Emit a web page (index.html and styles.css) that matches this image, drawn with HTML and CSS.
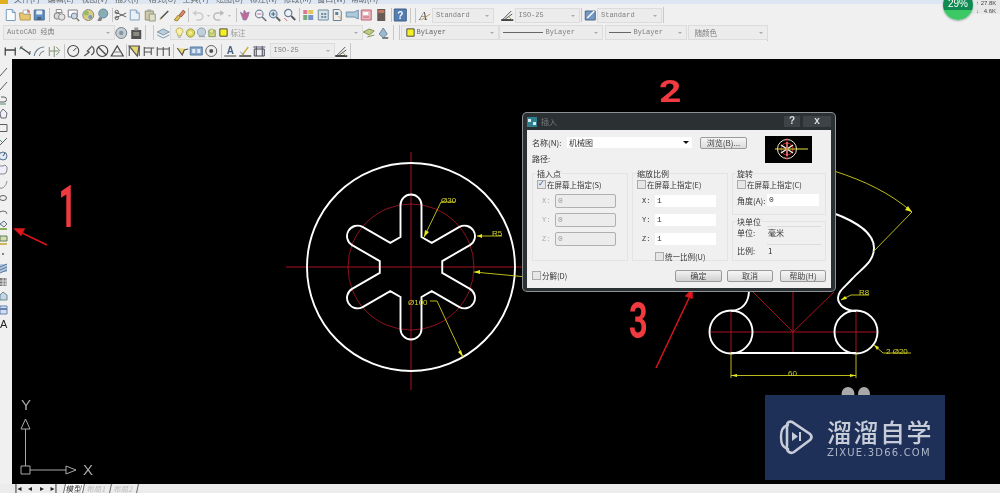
FILE: index.html
```html
<!DOCTYPE html>
<html lang="zh">
<head>
<meta charset="utf-8">
<title>AutoCAD 插入</title>
<link rel="stylesheet" href="styles.css">
</head>
<body>
<svg class="sprite" xmlns="http://www.w3.org/2000/svg">
  <symbol id="new" viewBox="0 0 14 14"><path d="M3 1.500h6l3 3v8H3z" fill="#fff" stroke="#5c8ab5"/><path d="M9 1.500v3h3" fill="#cfe0f0" stroke="#5c8ab5"/></symbol>
  <symbol id="open" viewBox="0 0 14 14"><path d="M1 5h4l1 1h6v6H2z" fill="#e5bd55" stroke="#a98428"/><path d="M5 2h6v4H5z" fill="#fff" stroke="#7b93ad" stroke-width=".7"/><path d="M9 1l3 3-3 1z" fill="#d8553a"/></symbol>
  <symbol id="save" viewBox="0 0 14 14"><path d="M2 2h10v10H2z" fill="#3f79b8" stroke="#27527f"/><path d="M4 2.500h6v4H4z" fill="#e8f0f7"/><path d="M5 9h4v3H5z" fill="#24456b"/></symbol>
  <symbol id="print" viewBox="0 0 14 14"><path d="M4 1.500h5l1 3H4z" fill="#fff" stroke="#777"/><circle cx="5" cy="8" r="3.200" fill="#d5d5d5" stroke="#666"/><circle cx="9.500" cy="9" r="3.200" fill="#e0e0e0" stroke="#777"/></symbol>
  <symbol id="prev" viewBox="0 0 14 14"><path d="M2 2h9v7H2z" fill="#fff" stroke="#667"/><circle cx="8" cy="8" r="3" fill="#bcd5ea" stroke="#667"/><path d="M10 10l3 3" stroke="#665" stroke-width="1.500"/></symbol>
  <symbol id="ball" viewBox="0 0 14 14"><circle cx="7" cy="7" r="5.500" fill="#d9c66a" stroke="#777"/><circle cx="5" cy="5" r="2.500" fill="#7fb04c"/><circle cx="9" cy="9" r="2" fill="#5b86bc"/></symbol>
  <symbol id="globe" viewBox="0 0 14 14"><circle cx="8" cy="5.500" r="4.500" fill="#6f9fb8" stroke="#4d6f82"/><path d="M6 3l3 1-1 3-2-1z" fill="#79a560"/><path d="M4 9l-2 4h4l1-3z" fill="#6a6a6a"/></symbol>
  <symbol id="cut" viewBox="0 0 14 14"><path d="M1 4l11 5M1 10l11-5" stroke="#444" fill="none"/><circle cx="2.500" cy="4" r="1.700" fill="none" stroke="#444"/><circle cx="2.500" cy="10" r="1.700" fill="none" stroke="#444"/></symbol>
  <symbol id="copy" viewBox="0 0 14 14"><path d="M2 2h6l3 3v7H2z" fill="#e9f1f8" stroke="#6a90b6"/><path d="M8 2v3h3" fill="#bcd3e8" stroke="#6a90b6"/></symbol>
  <symbol id="paste" viewBox="0 0 14 14"><path d="M2 3h8v9H2z" fill="#c8c19a" stroke="#7f7a55"/><path d="M6 6h6v7H6z" fill="#dcdcc0" stroke="#7a8a6a"/><path d="M4 1.500h4v2H4z" fill="#999"/></symbol>
  <symbol id="slash" viewBox="0 0 14 14"><path d="M3 11l8-8" stroke="#333" stroke-width="1.600"/><path d="M2 12l2-1-1-1z" fill="#b69c3a"/></symbol>
  <symbol id="paint" viewBox="0 0 14 14"><path d="M2 12l4-5 2 2-3 4z" fill="#e2b233" stroke="#8d6b18"/><path d="M7 7l4-5 2 2-4 5z" fill="#e0703c" stroke="#774022"/></symbol>
  <symbol id="undo" viewBox="0 0 14 14"><path d="M4 5h5a3 3 0 0 1 0 7H6" fill="none" stroke="#c4c4c4" stroke-width="1.600"/><path d="M6 2L2 5l4 3z" fill="#c4c4c4"/></symbol>
  <symbol id="redo" viewBox="0 0 14 14"><path d="M10 5H5a3 3 0 0 0 0 7h3" fill="none" stroke="#b0b0b0" stroke-width="1.600"/><path d="M8 2l4 3-4 3z" fill="#b0b0b0"/></symbol>
  <symbol id="drop" viewBox="0 0 7 14"><path d="M2 7h3L3.500 9z" fill="#bbb"/></symbol>
  <symbol id="pan" viewBox="0 0 14 14"><path d="M2 4l3 2 1-4 2 3 3-1-1 4-2 4H5z" fill="#b84a8a" stroke="#6b6f98" stroke-width=".7"/></symbol>
  <symbol id="zoom1" viewBox="0 0 14 14"><circle cx="6" cy="6" r="3.800" fill="#eef4fa" stroke="#5c6f85" stroke-width="1.200"/><path d="M9 9l4 4" stroke="#556" stroke-width="1.600"/><path d="M4 6h4" stroke="#c2526b"/></symbol>
  <symbol id="zoom2" viewBox="0 0 14 14"><circle cx="6" cy="6" r="3.800" fill="#c9def0" stroke="#4f6f94" stroke-width="1.200"/><path d="M9 9l4 4" stroke="#444" stroke-width="1.800"/><path d="M4 6h4M6 4v4" stroke="#345"/></symbol>
  <symbol id="zoom3" viewBox="0 0 14 14"><circle cx="6" cy="5" r="3.600" fill="#eef4fa" stroke="#4a5f80" stroke-width="1.200"/><path d="M9 8l4 4" stroke="#333" stroke-width="1.800"/><path d="M2 10l3 3" stroke="#c2526b"/></symbol>
  <symbol id="props" viewBox="0 0 14 14"><path d="M2 2h4v4H2z" fill="#d5607e"/><path d="M7 2h5v4H7z" fill="#d9c040"/><path d="M2 7h4v5H2z" fill="#5aa05c"/><path d="M7 7h5v5H7z" fill="#5b7fc0"/></symbol>
  <symbol id="grid" viewBox="0 0 14 14"><path d="M2 2h10v10H2z" fill="#d2e0e8" stroke="#54798a"/><path d="M5 5h2v2H5zM8 5h2v2H8zM5 8h2v2H5zM8 8h2v2H8z" fill="#54798a"/></symbol>
  <symbol id="sheet" viewBox="0 0 14 14"><path d="M3 1.500h6l2 2v9H3z" fill="#eee" stroke="#567"/><path d="M5 4h3v3H5z" fill="#406a86"/><path d="M8 8l4 4" stroke="#d09040"/></symbol>
  <symbol id="mark" viewBox="0 0 14 14"><path d="M1 4h8l4-2v9l-4-2H1z" fill="#9fc1d8" stroke="#5a7f9c"/></symbol>
  <symbol id="calc" viewBox="0 0 14 14"><path d="M2 2h10v10H2z" fill="#e5aab4" stroke="#b8485c"/><path d="M4 4h5v3H4z" fill="#fff"/><path d="M4 9h6" stroke="#b8485c"/></symbol>
  <symbol id="book" viewBox="0 0 14 14"><path d="M3 1h8v12H3z" fill="#4b3a34"/><path d="M4 2h6v3H4z" fill="#b85d44"/></symbol>
  <symbol id="help" viewBox="0 0 14 14"><path d="M1 1h12v12H1z" fill="#2f66a8" stroke="#1d3f6e"/><text x="7" y="11" font-size="10" font-weight="700" fill="#fff" text-anchor="middle" font-family="Liberation Sans">?</text></symbol>
  <symbol id="tstyle" viewBox="0 0 14 14"><text x="1" y="12" font-size="13" fill="#333" font-family="Liberation Serif" font-style="italic">A</text><path d="M3 12l9-6" stroke="#b8862f"/></symbol>
  <symbol id="dstyle" viewBox="0 0 14 14"><path d="M1 12h12" stroke="#222" stroke-width="2"/><path d="M3 11l8-8M5 11l7-5" stroke="#333"/><path d="M9 9l3 3" stroke="#9f8a30"/></symbol>
  <symbol id="tbl" viewBox="0 0 14 14"><path d="M2 3h10v9H2z" fill="#5a85b8" stroke="#2a4a76"/><path d="M4 10l7-7" stroke="#fff" stroke-width="1.500"/></symbol>
  <symbol id="wksp" viewBox="0 0 14 14"><circle cx="7" cy="7" r="5.500" fill="#bcc5cc" stroke="#5d6b74"/><circle cx="7" cy="7" r="2.200" fill="#6c8391"/></symbol>
  <symbol id="lock" viewBox="0 0 14 14"><path d="M2 4h10v9H2z" fill="#2f2f2f"/><path d="M4 6h6v4H4z" fill="#77736a"/><path d="M5 1.500h4v3H5z" fill="#888"/></symbol>
  <symbol id="layers" viewBox="0 0 14 14"><path d="M1 6l6-3 6 3-6 3z" fill="#afc7d8" stroke="#62839b"/><path d="M1 9l6 3 6-3" fill="none" stroke="#62839b"/></symbol>
  <symbol id="lstate" viewBox="0 0 14 14"><path d="M1 6l6-3 5 2-5 4z" fill="#b5c46a" stroke="#6a7d32"/><path d="M5 11l7-2" stroke="#6a7d32"/></symbol>
  <symbol id="lmatch" viewBox="0 0 14 14"><path d="M3 8l4-6 4 6-4 4z" fill="#8cadc8" stroke="#4f6f8d"/><path d="M6 12h6" stroke="#666" stroke-width="2"/></symbol>
  <symbol id="bulb" viewBox="0 0 12 14"><path d="M6 1.500a3.500 3.500 0 0 1 2 6.500v2H4V8a3.500 3.500 0 0 1 2-6.500z" fill="#fbf29a" stroke="#b59d2f"/><path d="M4.500 11.500h3" stroke="#888"/></symbol>
  <symbol id="sun" viewBox="0 0 12 14"><circle cx="6" cy="7" r="4.500" fill="#dcd33e" stroke="#7e8a2e"/><circle cx="6" cy="7" r="2" fill="#f2ec8e"/></symbol>
  <symbol id="ly2" viewBox="0 0 12 14"><circle cx="6" cy="6" r="4.500" fill="#b9cbd9" stroke="#75909f"/><path d="M3 11h7" stroke="#7b8e9a"/></symbol>
  <symbol id="ly3" viewBox="0 0 12 14"><path d="M2 4h7v7H2z" fill="#c9d26a" stroke="#6b8a44"/><circle cx="5" cy="5" r="2.500" fill="#e8e08a" stroke="#6b8a44" stroke-width=".6"/></symbol>
  <symbol id="yellow" viewBox="0 0 12 14"><path d="M2 2.500h8v8H2z" fill="#f7f100" stroke="#222"/></symbol>
  <symbol id="dlin" viewBox="0 0 14 14"><path d="M2 3.500v8M12 3.500v8M2 6h10" stroke="#222" stroke-width="1.300"/></symbol>
  <symbol id="dali" viewBox="0 0 14 14"><path d="M2 3l10 7" stroke="#222" stroke-width="1.300"/><path d="M4 2l-2 3M12 7l-1 4" stroke="#333"/><path d="M1 5l3-1" stroke="#2f7f50"/></symbol>
  <symbol id="darc" viewBox="0 0 14 14"><path d="M2 12a10 10 0 0 1 10-9" fill="none" stroke="#4d6d84" stroke-width="1.200"/><path d="M7 12a6 6 0 0 1 5-5" fill="none" stroke="#666"/></symbol>
  <symbol id="dord" viewBox="0 0 14 14"><path d="M2 3v9M7 2v11M2 7h10M9 3l4 4M9 11l3-3" stroke="#6a7f58"/></symbol>
  <symbol id="drad" viewBox="0 0 14 14"><circle cx="7" cy="7" r="5.500" fill="none" stroke="#222" stroke-width="1.100"/><path d="M7 7l3-3" stroke="#222"/></symbol>
  <symbol id="djog" viewBox="0 0 14 14"><path d="M10 2a5 5 0 0 1 0 9M3 12l5-4-2-1 4-4" fill="none" stroke="#333" stroke-width="1.200"/></symbol>
  <symbol id="ddia" viewBox="0 0 14 14"><circle cx="7" cy="7" r="5.500" fill="none" stroke="#222" stroke-width="1.200"/><path d="M3 3l8 8" stroke="#222" stroke-width="1.200"/></symbol>
  <symbol id="dang" viewBox="0 0 14 14"><path d="M1 12h12L7 2z" fill="none" stroke="#222" stroke-width="1.200"/><path d="M3 8h8" stroke="#666"/></symbol>
  <symbol id="dqk" viewBox="0 0 14 14"><path d="M2 2h10l-2 10z" fill="#e2d050" stroke="#333" stroke-width="1.200"/><path d="M2 2v10M12 2v10" stroke="#222"/></symbol>
  <symbol id="dbase" viewBox="0 0 14 14"><path d="M2 3v9M2 4h10M9 4v7M2 8h7" fill="none" stroke="#333" stroke-width="1.100"/></symbol>
  <symbol id="dcont" viewBox="0 0 14 14"><path d="M1 3v9M7 3v9M13 3v9M1 5h12" stroke="#333" stroke-width="1.100"/></symbol>
  <symbol id="tol" viewBox="0 0 14 14"><path d="M2 4l5 7 2-5 4-1" fill="#e3d65a" stroke="#333" stroke-width="1.200"/></symbol>
  <symbol id="dcen" viewBox="0 0 14 14"><path d="M1 3h12v8H1z" fill="#6f9ac6" stroke="#37618c"/><path d="M3 5h3v4H3zM8 5h3v4H8z" fill="#dce9f5"/></symbol>
  <symbol id="dins" viewBox="0 0 14 14"><circle cx="7" cy="7" r="5.500" fill="#eee" stroke="#444"/><circle cx="7" cy="7" r="2" fill="#333"/></symbol>
  <symbol id="dtxt" viewBox="0 0 14 14"><text x="7" y="10" font-size="10" fill="#27436b" text-anchor="middle" font-family="Liberation Sans" font-weight="700">A</text><path d="M1 12h12" stroke="#222" stroke-width="1.200"/></symbol>
  <symbol id="dupd" viewBox="0 0 14 14"><path d="M1 12h12" stroke="#222" stroke-width="1.500"/><path d="M4 11l6-8" stroke="#c8a12e" stroke-width="1.500"/><path d="M2 8l4 3" stroke="#4d7fa8"/></symbol>
  <symbol id="dbox" viewBox="0 0 14 14"><path d="M2 5h10v7H2z" fill="#eee" stroke="#223"/><path d="M4 2v10M10 2v10" stroke="#223"/><path d="M1 3h12" stroke="#446" stroke-width="1.200"/></symbol>
  <symbol id="l-line" viewBox="0 0 12 14"><path d="M0 11L7 3" stroke="#444"/></symbol>
  <symbol id="l-ray" viewBox="0 0 12 14"><path d="M0 11L7 3" stroke="#444"/></symbol>
  <symbol id="l-pl" viewBox="0 0 12 14"><path d="M1 4h3a2.500 2.500 0 0 1 0 5H0" fill="none" stroke="#444"/><path d="M0 11h6" stroke="#2f7f50"/></symbol>
  <symbol id="l-pg" viewBox="0 0 12 14"><path d="M1 11L0 6l3-4 4 4-1 5z" fill="#eef" stroke="#555"/></symbol>
  <symbol id="l-rect" viewBox="0 0 12 14"><path d="M0 3.500h7v7H0" fill="none" stroke="#444"/></symbol>
  <symbol id="l-arc" viewBox="0 0 12 14"><path d="M0 10L7 3" stroke="#444"/><path d="M0 5l2 2" stroke="#2f7f50"/></symbol>
  <symbol id="l-cir" viewBox="0 0 12 14"><circle cx="3" cy="7" r="4" fill="#dfeaf5" stroke="#34597f"/><path d="M3 7L5 4" stroke="#233"/></symbol>
  <symbol id="l-cld" viewBox="0 0 12 14"><path d="M0 3h3l2-1 2 2v3l-1 3-2 1H0" fill="#eef" stroke="#777"/></symbol>
  <symbol id="l-spl" viewBox="0 0 12 14"><path d="M0 11c3 1 6-2 7-7" fill="none" stroke="#777"/></symbol>
  <symbol id="l-ell" viewBox="0 0 12 14"><ellipse cx="3" cy="7" rx="3.500" ry="2.500" fill="none" stroke="#444"/></symbol>
  <symbol id="l-ela" viewBox="0 0 12 14"><path d="M-1 9a4 3 0 1 1 8 0" fill="none" stroke="#555"/></symbol>
  <symbol id="l-blk" viewBox="0 0 12 14"><path d="M0 5l4-3 3 3-3 3z" fill="#dfe7ef" stroke="#4a5d70"/><path d="M0 10h7" stroke="#7aa640" stroke-width="2"/></symbol>
  <symbol id="l-mk" viewBox="0 0 12 14"><path d="M0 3h7v5H0z" fill="#cfd9a8" stroke="#4a6a3a"/><path d="M0 11h7" stroke="#c2a52c" stroke-width="1.800"/></symbol>
  <symbol id="l-pt" viewBox="0 0 12 14"><circle cx="3" cy="7" r="1" fill="#444"/></symbol>
  <symbol id="l-ht" viewBox="0 0 12 14"><path d="M0 3h7v8H0z" fill="#a9c2dd"/><path d="M0 6l7-3M0 9l7-3M0 12l7-3" stroke="#40608a"/></symbol>
  <symbol id="l-gd" viewBox="0 0 12 14"><path d="M0 3h7v8H0z" fill="#666"/><path d="M0 6h7M0 9h7M3 3v8M6 3v8" stroke="#ddd"/></symbol>
  <symbol id="l-rg" viewBox="0 0 12 14"><path d="M0 11V6l3-3 4 3v5z" fill="#bdd3ea" stroke="#577"/></symbol>
  <symbol id="l-tb" viewBox="0 0 12 14"><path d="M0 3h7v8H0z" fill="#cfdcf0" stroke="#4f70a6"/><path d="M0 6h7" stroke="#4f70a6" stroke-width="2"/></symbol>
</svg>

<div class="app">
  <div class="menubar">
    <i class="app-logo"></i>
    <span class="mi mi-file">文件(F)</span><span class="mi">编辑(E)</span><span class="mi">视图(V)</span><span class="mi">插入(I)</span><span class="mi">格式(O)</span><span class="mi">工具(T)</span><span class="mi">绘图(D)</span><span class="mi">标注(N)</span><span class="mi">修改(M)</span><span class="mi">窗口(W)</span><span class="mi">帮助(H)</span>
  </div>

  <div class="tbrow row1">
    <svg class="ic"><use href="#new"/></svg><svg class="ic"><use href="#open"/></svg><svg class="ic"><use href="#save"/></svg>
    <i class="sep s5"></i>
    <svg class="ic"><use href="#print"/></svg><svg class="ic"><use href="#prev"/></svg><svg class="ic"><use href="#ball"/></svg><svg class="ic"><use href="#globe"/></svg>
    <i class="sep s4"></i>
    <svg class="ic"><use href="#cut"/></svg><svg class="ic"><use href="#copy"/></svg><svg class="ic"><use href="#paste"/></svg><svg class="ic"><use href="#slash"/></svg><svg class="ic"><use href="#paint"/></svg>
    <i class="sep s4"></i>
    <svg class="ic"><use href="#undo"/></svg><svg class="dd"><use href="#drop"/></svg><svg class="ic"><use href="#redo"/></svg><svg class="dd"><use href="#drop"/></svg>
    <i class="sep s5"></i>
    <svg class="ic"><use href="#pan"/></svg><svg class="ic"><use href="#zoom1"/></svg><svg class="ic"><use href="#zoom2"/></svg><svg class="ic"><use href="#zoom3"/></svg>
    <i class="sep s5"></i>
    <svg class="ic"><use href="#props"/></svg><svg class="ic"><use href="#grid"/></svg><svg class="ic"><use href="#sheet"/></svg><svg class="ic"><use href="#mark"/></svg><svg class="ic"><use href="#calc"/></svg><svg class="ic"><use href="#book"/></svg>
    <i class="sep s5"></i>
    <svg class="ic"><use href="#help"/></svg>
    <i class="grip g10"></i>
    <svg class="ic"><use href="#tstyle"/></svg>
    <div class="combo w60 ml1"><span>Standard</span></div>
    <svg class="ic ml7"><use href="#dstyle"/></svg>
    <div class="combo w63 ml1"><span>ISO-25</span></div>
    <i class="sep s4"></i>
    <svg class="ic"><use href="#tbl"/></svg>
    <div class="combo w63 ml1"><span>Standard</span></div>
    <i class="tb-end"></i>
  </div>

  <div class="tbrow row2">
    <div class="combo w110 ml4"><span>AutoCAD 经典</span></div>
    <svg class="ic"><use href="#wksp"/></svg><svg class="ic"><use href="#lock"/></svg>
    <i class="grip g13"></i>
    <svg class="ic"><use href="#layers"/></svg>
    <div class="combo w191">
      <svg class="lyi"><use href="#bulb"/></svg><svg class="lyi"><use href="#sun"/></svg><svg class="lyi"><use href="#ly2"/></svg><svg class="lyi"><use href="#ly3"/></svg><svg class="lyi"><use href="#yellow"/></svg>
      <span class="ly-name">标注</span>
    </div>
    <svg class="ic"><use href="#lstate"/></svg><svg class="ic"><use href="#lmatch"/></svg>
    <i class="grip g11"></i>
    <div class="combo w96">
      <svg class="lyi"><use href="#yellow"/></svg><span class="dark">ByLayer</span>
    </div>
    <div class="combo w102 ml2"><i class="lin"></i><span>ByLayer</span></div>
    <div class="combo w80 ml4"><i class="lin short"></i><span>ByLayer</span></div>
    <div class="combo w78 ml3"><span class="cjk">随颜色</span></div>
    <i class="tb-end"></i>
  </div>

  <div class="tbrow row3">
    <svg class="ic"><use href="#dlin"/></svg><svg class="ic"><use href="#dali"/></svg><svg class="ic"><use href="#darc"/></svg><svg class="ic"><use href="#dord"/></svg>
    <i class="sep s5"></i>
    <svg class="ic"><use href="#drad"/></svg><svg class="ic"><use href="#djog"/></svg><svg class="ic"><use href="#ddia"/></svg><svg class="ic"><use href="#dang"/></svg>
    <i class="sep s3"></i>
    <svg class="ic"><use href="#dqk"/></svg><svg class="ic"><use href="#dbase"/></svg><svg class="ic"><use href="#dcont"/></svg>
    <i class="sep s4"></i>
    <svg class="ic"><use href="#tol"/></svg><svg class="ic"><use href="#dcen"/></svg><svg class="ic"><use href="#dins"/></svg>
    <i class="sep s5"></i>
    <svg class="ic"><use href="#dtxt"/></svg><svg class="ic"><use href="#dupd"/></svg><svg class="ic"><use href="#dbox"/></svg>
    <div class="combo w63 ml4"><span>ISO-25</span></div>
    <svg class="ic"><use href="#dstyle"/></svg>
    <i class="tb-end"></i>
  </div>

  <div class="workspace">
    <div class="lefttb">
      <svg class="li"><use href="#l-line"/></svg><svg class="li"><use href="#l-ray"/></svg><svg class="li"><use href="#l-pl"/></svg><svg class="li"><use href="#l-pg"/></svg><svg class="li"><use href="#l-rect"/></svg><svg class="li"><use href="#l-arc"/></svg><svg class="li"><use href="#l-cir"/></svg><svg class="li"><use href="#l-cld"/></svg><svg class="li"><use href="#l-spl"/></svg><svg class="li"><use href="#l-ell"/></svg><svg class="li"><use href="#l-ela"/></svg><svg class="li"><use href="#l-blk"/></svg><svg class="li"><use href="#l-mk"/></svg><svg class="li"><use href="#l-pt"/></svg><svg class="li"><use href="#l-ht"/></svg><svg class="li"><use href="#l-gd"/></svg><svg class="li"><use href="#l-rg"/></svg><svg class="li"><use href="#l-tb"/></svg>
      <span class="li-a">A</span>
    </div>

    <div class="canvas">
      <svg class="drawing" viewBox="12 59 988 425" xmlns="http://www.w3.org/2000/svg">
        <g class="red">
          <circle cx="411" cy="267" r="63"/>
          <path d="M286 267H526M411 152V390"/>
          <path d="M709 332H878M793 292V353M731 311V353M856 311V353M753 292L793 332L834 292"/>
        </g>
        <g class="white">
          <circle cx="411" cy="267" r="104"/>
          <path transform="translate(411 267)" d="M31.230 5.910L58.940 21.910A10.500 10.500 0 0 1 48.440 40.090L20.730 24.090L10.500 30V62A10.500 10.500 0 0 1 -10.500 62V30L-20.730 24.090L-48.440 40.090A10.500 10.500 0 0 1 -58.940 21.910L-31.230 5.910V-5.910L-58.940 -21.910A10.500 10.500 0 0 1 -48.440 -40.090L-20.730 -24.090L-10.500 -30V-62A10.500 10.500 0 0 1 10.500 -62V-30L20.730 -24.090L48.440 -40.090A10.500 10.500 0 0 1 58.940 -21.910L31.230 -5.910Z"/>
          <circle cx="731" cy="332" r="21.500"/>
          <circle cx="856" cy="332" r="21.500"/>
          <path d="M731 353H856"/>
          <path d="M833 213C855 221 874 233 874 248C874 262 862 268 852 279C845 287 838 291 838 298C838 305 846 311 856 311"/>
          <path d="M749 290C749 303 742 310 731 311"/>
        </g>
        <g class="yel">
          <path d="M424 237L441 202H455"/>
          <path d="M477 236H502"/>
          <path d="M430 301H437L463 357"/>
          <path d="M474 272L527 277"/>
          <path d="M834 171C865 181 890 193 912 212L873 252"/>
          <path d="M841 300L851 295H869"/>
          <path d="M874 345L883 353H911"/>
          <path d="M731 353V378M856 353V378M731 375.500H856"/>
        </g>
        <g class="yel-fill">
          <path d="M424 237L425 230L429 232Z"/>
          <path d="M477 236L482 234V238Z"/>
          <path d="M474 272L480 270V274Z"/>
          <path d="M463 357L458 352L461 350Z"/>
          <path d="M912 212L905 210L908 206Z"/>
          <path d="M731 375.500L737 374V377ZM856 375.500L850 374V377Z"/>
          <path d="M841 300L845 296L847 299Z"/>
          <path d="M874 345L879 347L877 350Z"/>
        </g>
        <text class="dim" x="441" y="203">Ø30</text>
        <text class="dim" x="492" y="236">R5</text>
        <text class="dim" x="408" y="305">Ø100</text>
        <text class="dim" x="859" y="295">R8</text>
        <text class="dim" x="886" y="354">2 Ø20</text>
        <text class="dim" x="788" y="376">60</text>

        <g class="ucs">
          <path d="M21 466H30V474H21Z"/>
          <path d="M25.500 466V429M25.500 419L21 429H30ZM30 470H66M66 466L76 470L66 474Z"/>
        </g>
        <text class="ucs-t" x="21" y="410">Y</text>
        <text class="ucs-t" x="83" y="475">X</text>

        <ellipse class="blob" cx="848" cy="394" rx="6.500" ry="7"/>
        <ellipse class="blob" cx="864" cy="394" rx="6" ry="7"/>

        <text class="hand" transform="translate(58.500 227) scale(1.200 2.270)">1</text>
        <text class="hand" transform="translate(659 102) scale(1.500 1.170)">2</text>
        <text class="hand" transform="translate(629 338) scale(1.250 1.900)">3</text>
        <g class="arrow">
          <path d="M47 245L20 232"/>
          <path d="M15 229L24 229L21 235Z"/>
          <path d="M648 166L677 146"/>
          <path d="M682 142L674 144L678 150Z"/>
          <path d="M656 368L690 296"/>
          <path d="M692 290L686 296L692 298Z"/>
        </g>
      </svg>

      <section class="dialog">
        <header class="dlg-title">
          <svg class="dlg-ico" viewBox="0 0 10 10"><path d="M0 0h10v10H0z" fill="#2f7f8f"/><path d="M1 2h3v3H1zM6 5h3v3H6z" fill="#d9eef2"/></svg>
          <span class="dlg-name">插入</span>
          <span class="dlg-q">?</span><span class="dlg-x">x</span>
        </header>
        <div class="dlg-body">
          <div class="dlg-top">
            <div class="dlg-top-main">
              <div class="name-row">
                <label class="lbl name-lbl">名称(N):</label>
                <div class="name-in">机械图<i class="caret"></i></div>
                <button class="btn browse">浏览(B)...</button>
              </div>
              <div class="lbl path-row">路径:</div>
            </div>
            <svg class="preview" viewBox="0 0 47 27">
              <path d="M0 0h47v27H0z" fill="#000"/>
              <circle cx="22" cy="13" r="9.500" fill="none" stroke="#f0e8d0"/>
              <circle cx="22" cy="13" r="6" fill="none" stroke="#d22"/>
              <path d="M22 6v14M16 9l12 8M28 9l-12 8" stroke="#f4eee0" stroke-width="1.500"/>
              <path d="M10 13h33" stroke="#e6e040"/>
              <path d="M22 2v22" stroke="#c02020"/>
            </svg>
          </div>
          <div class="groups">
            <fieldset class="grp g-ins">
              <legend class="lbl">插入点</legend>
              <label class="chk"><i class="box on"></i>在屏幕上指定(S)</label>
              <div class="xyz off"><span>X:</span><div class="fld">0</div></div>
              <div class="xyz off"><span>Y:</span><div class="fld">0</div></div>
              <div class="xyz off"><span>Z:</span><div class="fld">0</div></div>
            </fieldset>
            <fieldset class="grp g-sca">
              <legend class="lbl">缩放比例</legend>
              <label class="chk"><i class="box"></i>在屏幕上指定(E)</label>
              <div class="xyz"><span>X:</span><div class="fld">1</div></div>
              <div class="xyz"><span>Y:</span><div class="fld">1</div></div>
              <div class="xyz"><span>Z:</span><div class="fld">1</div></div>
              <label class="chk uni"><i class="box"></i>统一比例(U)</label>
            </fieldset>
            <div class="col3">
              <fieldset class="grp g-rot">
                <legend class="lbl">旋转</legend>
                <label class="chk"><i class="box"></i>在屏幕上指定(C)</label>
                <div class="kv"><span>角度(A):</span><div class="fld">0</div></div>
              </fieldset>
              <fieldset class="grp g-unit">
                <legend class="lbl">块单位</legend>
                <div class="kv"><span>单位:</span><div class="ro">毫米</div></div>
                <div class="kv"><span>比例:</span><div class="ro">1</div></div>
              </fieldset>
            </div>
          </div>
          <div class="dlg-foot">
            <label class="chk foot-chk"><i class="box"></i>分解(D)</label>
            <button class="btn act first">确定</button>
            <button class="btn act">取消</button>
            <button class="btn act">帮助(H)</button>
          </div>
        </div>
      </section>

      <aside class="mark">
        <svg class="mark-ico" viewBox="0 0 34 36">
          <path d="M9 6C3 8 2 12 2 18s1 10 7 12" fill="none" stroke="#c6ccd8" stroke-width="2.400" stroke-linecap="round"/>
          <path d="M8 27V6C8 3 11 2 13 3L31 15C33 17 33 19 31 21L15 33C12 35 8 33 8 29" fill="none" stroke="#c6ccd8" stroke-width="2.600" stroke-linecap="round"/>
          <path d="M13 13l6 4.500-6 4.500z" fill="#c6ccd8"/>
          <path d="M21 13v9" stroke="#c6ccd8" stroke-width="2"/>
        </svg>
        <div class="mark-txt">
          <div class="mark-cn">溜溜自学</div>
          <div class="mark-en">ZIXUE.3D66.COM</div>
        </div>
      </aside>
    </div>
  </div>

  <div class="tabs">
    <div class="navs"><span>|◂</span><span>◂</span><span>▸</span><span>▸|</span></div>
    <span class="tab active">模型</span><span class="tab">布局1</span><span class="tab">布局2</span>
  </div>

  <div class="net">
    <span><b class="up">↑</b> 27.8K</span>
    <span class="net-down"><b class="down">↓</b> 4.6K</span>
  </div>
  <div class="gauge">29%</div>
</div>
</body>
</html>
```

FILE: styles.css
```css
* { box-sizing: border-box; }
html, body { margin: 0; height: 100%; overflow: hidden; background: #f0f0f0; }
.sprite { display: none; }
i { display: block; font-style: normal; }

.app {
  position: relative;
  width: 1000px;
  height: 493px;
  display: flex;
  flex-direction: column;
  overflow: hidden;
  background: #f0f0f0;
  font: 8px "Noto Sans CJK SC", "Liberation Sans", sans-serif;
  color: #333;
  filter: blur(.55px);
}

/* menu, cropped at the window's upper edge */
.menubar {
  height: 4px;
  flex: none;
  display: flex;
  align-items: flex-end;
  background: #dde7f4;
  line-height: 10px;
  color: #666;
}
.app-logo { width: 8px; height: 4px; background: #e0b020; }
.mi { width: 33.700px; flex: none; font-size: 8px; white-space: nowrap; }
.mi-file { margin-left: 6px; }

/* toolbars */
.tbrow { flex: none; display: flex; align-items: center; background: #f0f0f0; }
.row1 { height: 19px; padding: 3px 0 0 3px; width: 664px; }
.row2 { height: 18px; padding-top: 1px; width: 768px; }
.row3 { height: 18px; padding: 1px 0 0 3px; width: 351px; }
.ic { width: 14.500px; height: 14px; flex: none; opacity: .82; }
.dd { width: 7px; height: 14px; flex: none; }
.sep { height: 14px; flex: none; position: relative; }
.sep::after { content: ""; position: absolute; left: 50%; top: 0; bottom: 0; width: 1px; background: #c4c4c4; }
.s3 { width: 3px; } .s4 { width: 4px; } .s5 { width: 5px; }
.grip { height: 15px; flex: none; border-left: 1px solid #c8c8c8; border-right: 1px solid #c8c8c8; margin: 0 2px; }
.g10 { width: 6px; }
.g13 { width: 9px; }
.g11 { width: 7px; }
.tb-end { width: 1px; height: 16px; background: #c8c8c8; margin-left: auto; flex: none; }

.combo {
  position: relative;
  height: 13px;
  flex: none;
  display: flex;
  align-items: center;
  padding-left: 3px;
  background: #ececec;
  box-shadow: 0 0 0 1px #dcdcdc;
  font: 7px/13px "Liberation Mono", "Noto Sans CJK SC", monospace;
  color: #808080;
  white-space: nowrap;
}
.combo::after {
  content: "";
  position: absolute;
  right: 4px;
  top: 6px;
  border: 2px solid transparent;
  border-top-color: #aaa;
}
.w60 { width: 60px; } .w63 { width: 63px; } .w78 { width: 78px; } .w80 { width: 80px; }
.w96 { width: 96px; } .w102 { width: 102px; } .w110 { width: 110px; } .w191 { width: 191px; }
.ml1 { margin-left: 1px; } .ml2 { margin-left: 2px; } .ml3 { margin-left: 3px; } .ml4 { margin-left: 4px; } .ml7 { margin-left: 7px; }
.dark { color: #666; margin-left: 1px; }
.cjk { font: 7.500px "Noto Sans CJK SC", sans-serif; margin-left: 3px; color: #808080; }
.lyi { width: 11px; height: 14px; flex: none; opacity: .85; }
.ly-name { font: 7.500px "Noto Sans CJK SC", sans-serif; margin-left: 2px; color: #999; }
.lin { width: 40px; height: 1px; background: #666; margin-right: 3px; flex: none; }
.lin.short { width: 22px; }

/* workspace */
.workspace { flex: 1; display: flex; min-height: 0; }
.lefttb {
  width: 12px;
  flex: none;
  display: flex;
  flex-direction: column;
  padding-top: 6px;
  background: #f0f0f0;
  overflow: hidden;
}
.li { width: 12px; height: 14px; flex: none; opacity: .85; }
.li-a { font: 11px/14px "Liberation Sans", sans-serif; color: #222; }
.canvas { position: relative; flex: 1; background: #000; overflow: hidden; }
.drawing { position: absolute; inset: 0; width: 100%; height: 100%; display: block; }
.red *, .white *, .yel * { fill: none; }
.red { stroke: #a81320; stroke-width: 1; }
.red circle { stroke: #8e1220; }
.white { stroke: #fff; stroke-width: 1.900; }
.yel { stroke: #cfcf1e; stroke-width: .9; }
.yel-fill { fill: #e8e820; }
.dim { font: 8px "Liberation Sans", sans-serif; fill: #d4d42a; }
.ucs { fill: none; stroke: #bbb; stroke-width: .9; }
.ucs-t { font: 15px "Liberation Sans", sans-serif; fill: #aaa; }
.blob { fill: #aaa; }
.hand { font: 700 26px Roboto, "Liberation Sans", sans-serif; fill: #f03a3f; }
.arrow { fill: #e5171e; stroke: #d9151c; stroke-width: 1.500; }

/* insert dialog */
.dialog {
  position: absolute;
  left: 511px;
  top: 54px;
  width: 312px;
  height: 178px;
  padding: 0 4px 3px;
  display: flex;
  flex-direction: column;
  background: #2b3033;
  border-radius: 4px;
  box-shadow: 0 0 0 1px #8b9096;
}
.dlg-title { height: 17px; flex: none; display: flex; align-items: center; color: #cfd3d6; }
.dlg-ico { width: 10px; height: 10px; flex: none; margin-right: 4px; }
.dlg-name { font-size: 8px; color: #75797c; flex: 1; }
.dlg-q, .dlg-x {
  height: 11px;
  background: #3d4346;
  color: #ddd;
  font: 700 10px/10px "Liberation Sans", sans-serif;
  text-align: center;
}
.dlg-q { width: 16px; margin-right: 3px; }
.dlg-x { width: 28px; }
.dlg-body {
  flex: 1;
  background: #f0f0f0;
  padding: 6px 5px 0;
  display: flex;
  flex-direction: column;
  font-size: 8px;
  color: #333;
  min-height: 0;
}
.lbl { font-size: 8px; line-height: 11px; color: #333; }
.dlg-top { display: flex; height: 30px; flex: none; }
.dlg-top-main { width: 233px; flex: none; display: flex; flex-direction: column; }
.name-row { display: flex; align-items: center; height: 13px; }
.name-lbl { width: 35px; flex: none; }
.name-in {
  width: 125px;
  height: 11px;
  flex: none;
  position: relative;
  background: #fff;
  font-size: 8px;
  line-height: 11px;
  padding-left: 2px;
}
.caret { position: absolute; right: 3px; top: 4px; border: 3px solid transparent; border-top-color: #111; border-bottom: 0; }
.btn {
  height: 12px;
  padding: 0;
  font: 8px/10px "Noto Sans CJK SC", sans-serif;
  color: #444;
  background: linear-gradient(#f6f6f6, #dcdcdc);
  border: 1px solid #9a9a9a;
  border-radius: 2px;
}
.browse { width: 47px; margin-left: 8px; flex: none; }
.path-row { margin-top: 4px; }
.preview { width: 47px; height: 27px; flex: none; display: block; }

.groups { display: grid; grid-template-columns: 96px 96px 94px; gap: 0 4px; margin-top: 2px; flex: none; }
.grp { border: 1px solid #e4e4e4; margin: 0; padding: 0 4px; min-width: 0; position: relative; }
.grp legend { padding: 0; font-size: 8px; }
.g-ins, .g-sca { height: 93px; }
.chk { display: flex; align-items: center; font-size: 7.500px; line-height: 11px; white-space: nowrap; color: #333; }
.box { width: 9px; height: 9px; flex: none; margin-right: 1px; background: #e6e6e6; border: 1px solid #aaa; position: relative; }
.box.on::after { content: "✓"; position: absolute; left: 0; top: -2px; font: 700 8px/10px "DejaVu Sans", sans-serif; color: #3560a8; }
.xyz { display: flex; align-items: center; height: 14px; margin-top: 5px; }
.xyz:first-of-type { margin-top: 4px; }
.xyz span { width: 18px; flex: none; padding-left: 5px; font: 7px "Liberation Mono", monospace; }
.fld { height: 12px; flex: 1; background: #fff; font: 8px/12px "Liberation Mono", monospace; padding-left: 2px; }
.xyz .fld { max-width: 61px; }
.xyz.off span { color: #aaa; }
.xyz.off .fld { height: 14px; background: #ececec; border: 1px solid #b0b0b0; border-radius: 2px; color: #999; line-height: 12px; }
.uni { margin: 5px 0 0 18px; }

.col3 { display: flex; flex-direction: column; height: 93px; }
.g-rot { height: 47px; flex: none; }
.kv { display: flex; align-items: center; height: 12px; margin-top: 4px; font-size: 8px; white-space: nowrap; }
.kv > span { width: 30px; flex: none; }
.kv .fld { max-width: 52px; }
.g-unit { flex: 1; margin-top: 1px; }
.g-unit .kv { margin-top: -1px; margin-bottom: 7px; }
.g-unit .kv:last-child { margin-bottom: 0; }
.ro { flex: 1; border-top: 1px solid #dcdcdc; font-size: 8px; line-height: 12px; padding-left: 1px; }

.dlg-foot { display: flex; align-items: center; flex: 1; gap: 5px; min-height: 0; padding-top: 2px; }
.foot-chk { flex: 1; }
.act { width: 46px; flex: none; }
.act.first { width: 47px; background: linear-gradient(#f2f2f2, #cfcfcf); }
.dlg-foot .act:last-child { margin-left: 2px; }

/* watermark */
.mark {
  position: absolute;
  left: 753px;
  top: 336px;
  width: 180px;
  height: 85px;
  padding: 24px 0 0 14px;
  background: #1f3058;
  display: flex;
  align-items: flex-start;
}
.mark-ico { width: 34px; height: 36px; flex: none; display: block; }
.mark-txt { margin-left: 14px; display: flex; flex-direction: column; }
.mark-cn { font: 500 25px/24px "Noto Sans CJK SC", sans-serif; letter-spacing: 1.500px; color: #c6ccd8; white-space: nowrap; }
.mark-en { font: 10px/10px "DejaVu Sans", sans-serif; letter-spacing: 1.200px; margin-top: 5px; color: #aeb6c8; white-space: nowrap; }

/* tab bar */
.tabs { height: 9px; flex: none; display: flex; align-items: center; overflow: hidden; background: #ececec; padding-left: 12px; line-height: 9px; }
.navs { display: flex; width: 52px; flex: none; font: 700 8px/9px "DejaVu Sans", sans-serif; color: #222; }
.navs span { width: 12px; text-align: center; }
.tab { width: 27px; padding-left: 3px; flex: none; color: #bbb; white-space: nowrap; font-size: 7.500px; border-right: 1px solid #666; transform: skewX(-12deg); }
.tab.active { background: #fff; color: #333; width: 20px; font-size: 8px; padding-left: 1px; border-left: 1px solid #666; }

/* floating network meter */
.net {
  position: absolute;
  left: 970px;
  top: 0;
  width: 30px;
  height: 14px;
  padding-left: 6px;
  display: flex;
  flex-direction: column;
  justify-content: space-between;
  background: #e8e8e8;
  font: 6px/6px "Liberation Sans", sans-serif;
  color: #444;
  white-space: nowrap;
}
.net b { font-weight: 400; }
.up { color: #c33; }
.down { color: #2a8f50; }
.net-down b { margin-right: 3px; }
.gauge {
  position: absolute;
  left: 943px;
  top: -10px;
  width: 30px;
  height: 30px;
  padding-top: 8px;
  border-radius: 50%;
  background: linear-gradient(#0f8a50 0 68%, #3cc864 68%);
  box-shadow: 0 1px 2px #9aa;
  color: #fff;
  font: 10px/12px "Liberation Sans", sans-serif;
  text-align: center;
}
```
